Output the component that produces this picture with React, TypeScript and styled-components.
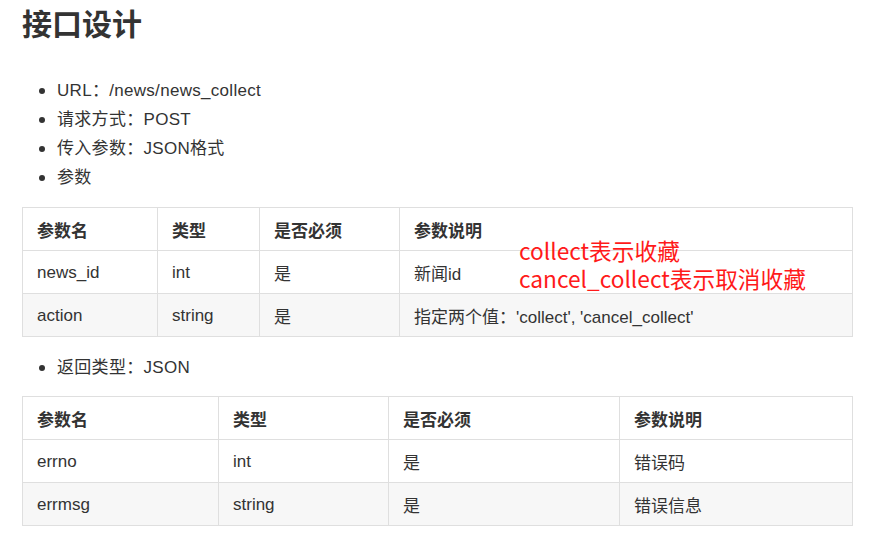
import React from 'react';
import styled, { createGlobalStyle } from 'styled-components';

const GlobalStyle = createGlobalStyle`
  * {
    margin: 0;
    padding: 0;
    box-sizing: border-box;
  }
  html, body, #root {
    height: 100%;
  }
  body {
    font-family: "Liberation Sans", "Noto Sans CJK SC", sans-serif;
    background: #ffffff;
    color: #333333;
    overflow: hidden;
  }
`;

const Page = styled.div`
  width: 852px;
  padding: 5px 0 0 22px;
`;

const Title = styled.h1`
  font-size: 30px;
  line-height: 40px;
  font-weight: 700;
  color: #333333;
`;

const List = styled.ul<{ $top: number }>`
  list-style: none;
  margin-top: ${({ $top }) => $top}px;
`;

const Item = styled.li`
  position: relative;
  padding-left: 35px;
  font-size: 17px;
  line-height: 29px;
  letter-spacing: 0.3px;
  color: #333333;

  &::before {
    content: '';
    position: absolute;
    left: 17px;
    top: 12px;
    width: 6px;
    height: 6px;
    border-radius: 50%;
    background: #333333;
  }
`;

const TableWrap = styled.div<{ $top: number }>`
  position: relative;
  margin-top: ${({ $top }) => $top}px;
`;

const Table = styled.table`
  width: 830px;
  border-collapse: collapse;
  table-layout: fixed;
  font-size: 17px;
  color: #333333;
`;

const Row = styled.tr<{ $alt?: boolean }>`
  height: 43px;
  background: ${({ $alt }) => ($alt ? '#f7f7f7' : '#ffffff')};
`;

const Head = styled.th`
  border: 1px solid #dfdfdf;
  padding: 0 14px;
  text-align: left;
  font-weight: 700;
`;

const Cell = styled.td`
  border: 1px solid #dfdfdf;
  padding: 1px 14px 0;
  white-space: nowrap;
`;

const Note = styled.div`
  position: absolute;
  left: 497px;
  top: 30px;
  font-family: "Noto Sans CJK SC", "Open Sans", sans-serif;
  font-size: 22.7px;
  line-height: 28px;
  color: #ff1a1a;
  white-space: nowrap;
`;

type TableData = {
  widths: number[];
  head: string[];
  rows: string[][];
};

const paramsTable: TableData = {
  widths: [135, 102, 140, 453],
  head: ['参数名', '类型', '是否必须', '参数说明'],
  rows: [
    ['news_id', 'int', '是', '新闻id'],
    ['action', 'string', '是', "指定两个值：'collect', 'cancel_collect'"],
  ],
};

const returnTable: TableData = {
  widths: [196, 170, 231, 233],
  head: ['参数名', '类型', '是否必须', '参数说明'],
  rows: [
    ['errno', 'int', '是', '错误码'],
    ['errmsg', 'string', '是', '错误信息'],
  ],
};

const DocTable: React.FC<{ data: TableData }> = ({ data }) => (
  <Table>
    <colgroup>
      {data.widths.map((w, i) => (
        <col key={i} style={{ width: w }} />
      ))}
    </colgroup>
    <thead>
      <Row>
        {data.head.map((h) => (
          <Head key={h}>{h}</Head>
        ))}
      </Row>
    </thead>
    <tbody>
      {data.rows.map((r, i) => (
        <Row key={i} $alt={i % 2 === 1}>
          {r.map((c, j) => (
            <Cell key={j}>{c}</Cell>
          ))}
        </Row>
      ))}
    </tbody>
  </Table>
);

const App: React.FC = () => {
  return (
    <>
      <GlobalStyle />
      <Page>
        <Title>接口设计</Title>
        <List $top={31}>
          <Item>URL：/news/news_collect</Item>
          <Item>请求方式：POST</Item>
          <Item>传入参数：JSON格式</Item>
          <Item>参数</Item>
        </List>
        <TableWrap $top={15}>
          <DocTable data={paramsTable} />
          <Note>
            <div>collect表示收藏</div>
            <div>cancel_collect表示取消收藏</div>
          </Note>
        </TableWrap>
        <List $top={16}>
          <Item>返回类型：JSON</Item>
        </List>
        <TableWrap $top={14}>
          <DocTable data={returnTable} />
        </TableWrap>
      </Page>
    </>
  );
};

export default App;
